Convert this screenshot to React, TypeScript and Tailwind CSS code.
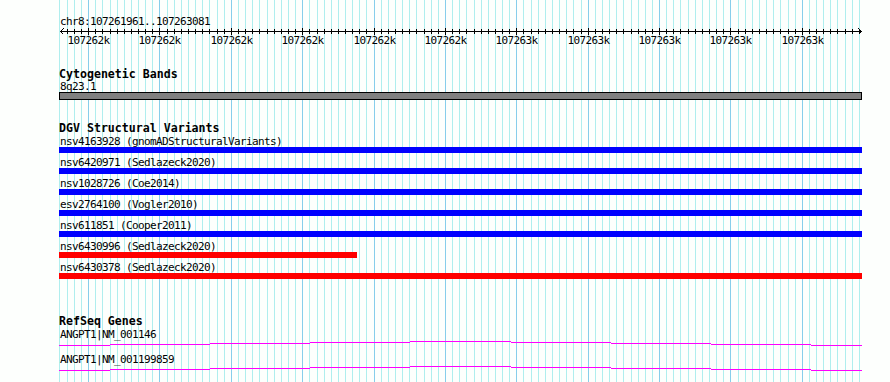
import React from 'react';

const START = 107261961;
const END = 107263081;
const SCALE = 0.71365;

// pixel column for a base position
const px = (bp: number) => Math.round(60.3 + (bp - START) * SCALE);

const gridLines: { x: number; major: boolean }[] = [{ x: 59, major: false }];
for (let bp = 107261970; bp < END; bp += 10) {
  gridLines.push({ x: px(bp), major: bp % 100 === 0 });
}

const majors = gridLines.filter((g) => g.major);

const variants = [
  { id: 'nsv4163928 (gnomADStructuralVariants)', color: 'bg-[#0000ff]', w: 'w-[803px]' },
  { id: 'nsv6420971 (Sedlazeck2020)', color: 'bg-[#0000ff]', w: 'w-[803px]' },
  { id: 'nsv1028726 (Coe2014)', color: 'bg-[#0000ff]', w: 'w-[803px]' },
  { id: 'esv2764100 (Vogler2010)', color: 'bg-[#0000ff]', w: 'w-[803px]' },
  { id: 'nsv611851 (Cooper2011)', color: 'bg-[#0000ff]', w: 'w-[803px]' },
  { id: 'nsv6430996 (Sedlazeck2020)', color: 'bg-[#ff0000]', w: 'w-[298px]' },
  { id: 'nsv6430378 (Sedlazeck2020)', color: 'bg-[#ff0000]', w: 'w-[803px]' },
];

// small label text: 6px per character like the bitmap font
const small = 'text-[11px] tracking-[-0.62px] leading-[11px] whitespace-nowrap';

function Grid() {
  return (
    <svg className="absolute inset-0 pointer-events-none" width={890} height={382}>
      {gridLines.map((g, i) => (
        <rect key={i} x={g.x} y={0} width={1} height={382} fill={g.major ? '#87ceeb' : '#afeeee'} />
      ))}
    </svg>
  );
}

function Ruler() {
  return (
    <svg className="block" width={890} height={20} shapeRendering="crispEdges">
      <rect x={60} y={5} width={802} height={1} fill="#000" />
      {/* arrow heads */}
      <path d="M60.5 5.5 L63.5 2.5 M60.5 5.5 L63.5 8.5" stroke="#000" strokeWidth={1} />
      <path d="M861.5 5.5 L858.5 2.5 M861.5 5.5 L858.5 8.5" stroke="#000" strokeWidth={1} />
      {gridLines.slice(1).map((g, i) => (
        <rect key={i} x={g.x} y={g.major ? 2 : 3} width={1} height={g.major ? 7 : 5} fill="#000" />
      ))}
      {majors.map((g, i) => (
        <text
          key={i}
          x={g.x - 20.5}
          y={18}
          fontFamily="'DejaVu Sans Mono', monospace"
          fontSize={11}
          letterSpacing={-0.62}
          fill="#000"
        >
          {i < 6 ? '107262k' : '107263k'}
        </text>
      ))}
    </svg>
  );
}

// intron "hat" drawn as 1px runs, like the bitmap renderer does
function Hat({ base }: { base: number }) {
  const runs: { x: number; w: number; y: number }[] = [];
  const peak = 460;
  for (let x = 59; x <= 861; x++) {
    const y = Math.round(base - 4 * (1 - Math.abs(x - peak) / 401));
    const last = runs[runs.length - 1];
    if (last && last.y === y) last.w++;
    else runs.push({ x, w: 1, y });
  }
  return (
    <svg className="block" width={890} height={7}>
      {runs.map((r, i) => (
        <rect key={i} x={r.x} y={r.y} width={r.w} height={1} fill="#ff00ff" />
      ))}
    </svg>
  );
}

function Title({ children, h }: { children: React.ReactNode; h: string }) {
  return <div className={`pl-[59px] ${h} text-[11.6px] font-bold whitespace-nowrap`}>{children}</div>;
}

export default function App() {
  return (
    <div
      className="relative w-[890px] h-[382px] overflow-hidden bg-[#fdfffd] text-black"
      style={{ fontFamily: "'DejaVu Sans Mono', 'Liberation Mono', monospace" }}
    >
      <Grid />
      <div className="relative flex flex-col">
        {/* Ruler */}
        <div className={`mt-[16px] pl-[60px] h-[10px] ${small}`}>chr8:107261961..107263081</div>
        <Ruler />

        {/* Cytogenetic Bands */}
        <div className="mt-[22px]">
          <Title h="h-[13px] leading-[13px]">Cytogenetic Bands</Title>
        </div>
        <div className={`pl-[60px] h-[11px] ${small}`}>8q23.1</div>
        <div className="ml-[59px] w-[803px] h-[8px] border border-black bg-[#808080]" />

        {/* DGV Structural Variants */}
        <div className="mt-[22px]">
          <Title h="h-[14px] leading-[13px]">DGV Structural Variants</Title>
        </div>
        {variants.map((v) => (
          <div key={v.id} className="flex flex-col mb-[4px]">
            <div className={`pl-[60px] h-[11px] ${small}`}>{v.id}</div>
            <div className={`ml-[59px] h-[6px] ${v.w} ${v.color}`} />
          </div>
        ))}

        {/* RefSeq Genes */}
        <div className="mt-[33px]">
          <Title h="h-[13px] leading-[10px]">RefSeq Genes</Title>
        </div>
        <div className={`pl-[60px] h-[11px] ${small}`}>ANGPT1|NM_001146</div>
        <Hat base={5} />
        <div className={`mt-[7px] pl-[60px] h-[12px] ${small}`}>ANGPT1|NM_001199859</div>
        <Hat base={4} />
      </div>
    </div>
  );
}
